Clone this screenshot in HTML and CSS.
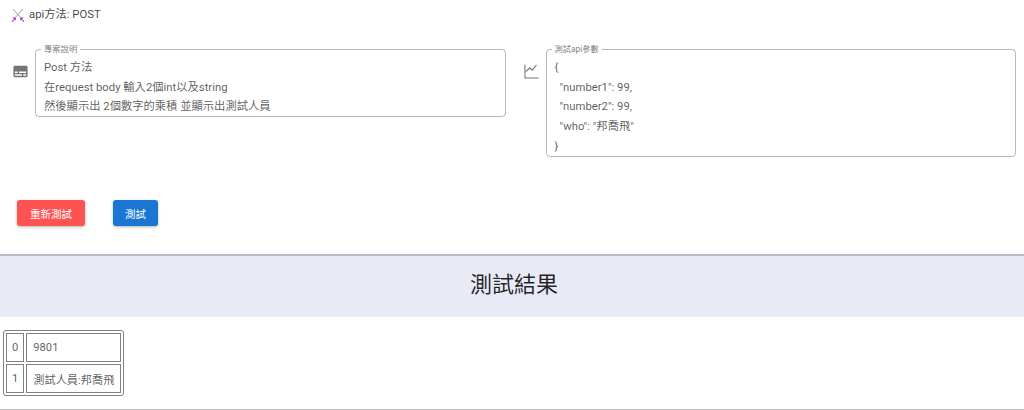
FILE: index.html
```html
<!DOCTYPE html>
<html lang="zh-Hant">
<head>
<meta charset="utf-8">
<title>api方法: POST</title>
<link rel="stylesheet" href="styles.css">
</head>
<body>
<header class="method">
  <svg class="swords" viewBox="0 0 16 16" width="16" height="16" aria-hidden="true">
    <path class="blade" d="M3 2 L11 11 M13 2 L5 11"/>
    <path class="hilt" d="M1.500 14.500 L4 12 L2.500 10.500 L5.500 10.500 L6 13.500 L4.500 12.500 L2.500 15 Z M14.500 14.500 L12 12 L13.500 10.500 L10.500 10.500 L10 13.500 L11.500 12.500 L13.500 15 Z"/>
  </svg>
  <span>api方法: POST</span>
</header>
<section class="fields">
  <div class="field">
    <svg class="field-icon" viewBox="0 0 24 24" aria-hidden="true">
      <path d="M20 4H4c-1.100 0-2 .9-2 2v12c0 1.100.9 2 2 2h16c1.100 0 2-.9 2-2V6c0-1.100-.9-2-2-2zM4 12h4v2H4v-2zm10 6H4v-2h10v2zm6 0h-4v-2h4v2zm0-4H10v-2h10v2z"/>
    </svg>
    <fieldset class="box">
      <legend>專案說明</legend>
      <div class="lines">
        <div>Post 方法</div>
        <div>在request body 輸入2個int以及string</div>
        <div>然後顯示出 2個數字的乘積 並顯示出測試人員</div>
      </div>
    </fieldset>
  </div>
  <div class="field">
    <svg class="field-icon" viewBox="0 0 24 24" aria-hidden="true">
      <path d="M3.500 18.490l6-6.010 4 4L22 6.920l-1.410-1.410-7.090 7.970-4-4L2 16.990z" transform="translate(2 -2) scale(.8)"/>
      <path d="M2 2h1.500v18.500H22V22H2z"/>
    </svg>
    <fieldset class="box">
      <legend>測試api參數</legend>
      <div class="lines">
        <div>{</div>
        <div class="indent">"number1": 99,</div>
        <div class="indent">"number2": 99,</div>
        <div class="indent">"who": "邦喬飛"</div>
        <div>}</div>
      </div>
    </fieldset>
  </div>
</section>
<section class="actions">
  <button class="btn btn-red" type="button">重新測試</button>
  <button class="btn btn-blue" type="button">測試</button>
</section>
<h2 class="band">測試結果</h2>
<table class="result">
  <tr><td class="key">0</td><td class="wide">9801</td></tr>
  <tr><td class="key">1</td><td class="wide">測試人員:邦喬飛</td></tr>
</table>
<hr class="end">
</body>
</html>
```
FILE: styles.css
```css
* { box-sizing: border-box; }
html, body { margin: 0; padding: 0; height: 410px; overflow: hidden; background: #fff; }
body {
  font-family: Roboto, "Noto Sans CJK TC", sans-serif;
  font-size: 11.3px;
  color: rgba(0, 0, 0, .66);
}
.method {
  display: flex;
  align-items: center;
  gap: 3px;
  height: 30px;
  padding: 0 0 4px 10px;
  font-size: 11.3px;
  color: rgba(0, 0, 0, .75);
}
.swords { flex: none; margin-top: 3px; }
.blade { fill: none; stroke: #a79ab0; stroke-width: 1; }
.hilt { fill: #9c27b0; }
.fields {
  display: grid;
  grid-template-columns: 1fr 1fr;
  gap: 17px;
  align-items: start;
  padding: 14px 8px 0 12px;
  height: 170px;
}
.field { display: flex; gap: 6px; align-items: flex-start; }
.field-icon { flex: none; width: 17px; height: 17px; margin-top: 19px; fill: #757575; }
.box {
  flex: 1;
  min-width: 0;
  margin: 0;
  padding: 0 8px;
  border: 1px solid rgba(0, 0, 0, .28);
  border-radius: 4px;
}
.box legend {
  padding: 0 3px;
  margin-left: -3px;
  font-size: 8.300px;
  line-height: 11px;
  color: rgba(0, 0, 0, .55);
}
.lines { line-height: 19.7px; margin: 3px 0 -1px; }
.indent { padding-left: 5px; }
.actions {
  display: flex;
  gap: 28px;
  padding-left: 17px;
  height: 54px;
}
.btn {
  height: 26px;
  padding: 0;
  border: 0;
  border-radius: 3px;
  font-family: inherit;
  font-size: 10.5px;
  color: #fff;
  white-space: nowrap;
  box-shadow: 0 1px 3px rgba(0, 0, 0, .3);
}
.btn-red { width: 68px; background: #ff5252; }
.btn-blue { width: 45px; background: #1976d2; }
.band {
  margin: 0;
  height: 63px;
  line-height: 58px;
  padding-left: 4px;
  text-align: center;
  font-size: 22px;
  font-weight: 400;
  color: rgba(0, 0, 0, .85);
  background: #e8eaf6;
  border-top: 2px solid #b9bac6;
  border-bottom: 1px solid #f0f0f4;
}
.result {
  margin: 13px 0 0 3px;
  height: 66px;
  border: 1px solid #808080;
  border-radius: 3px;
  border-spacing: 2px;
  font-size: 11.2px;
}
.result td {
  height: 29px;
  padding: 0 6px;
  border: 1px solid #808080;
  white-space: nowrap;
}
.result .key { padding: 0 5px; }
.wide { width: 94px; }
.end {
  margin: 13px 0 0;
  border: 0;
  border-top: 1px solid #bdbdbd;
}
```
